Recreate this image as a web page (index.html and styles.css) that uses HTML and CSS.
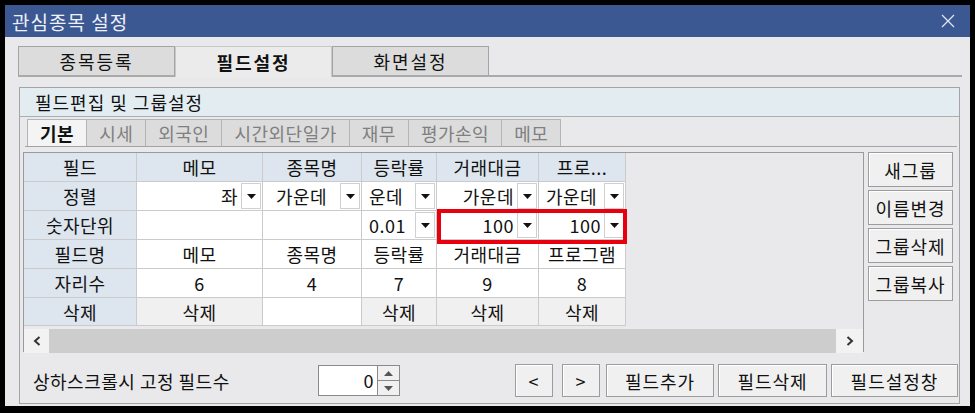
FILE: index.html
```html
<!doctype html>
<html>
<head>
<meta charset="utf-8">
<title>관심종목 설정</title>
<link rel="stylesheet" href="styles.css">
</head>
<body>
<div class="window">
  <div class="titlebar">
    <span class="title">관심종목 설정</span>
    <svg class="close" width="14" height="14" viewBox="0 0 14 14"><path d="M1 1L13 13M13 1L1 13" stroke="#dfe5f1" stroke-width="1.3" fill="none"/></svg>
  </div>

  <div class="tabs">
    <div class="tab">종목등록</div>
    <div class="tab active">필드설정</div>
    <div class="tab">화면설정</div>
  </div>

  <div class="group">
    <div class="group-head">필드편집 및 그룹설정</div>

    <div class="subtabs">
      <div class="subtab active">기본</div>
      <div class="subtab">시세</div>
      <div class="subtab">외국인</div>
      <div class="subtab">시간외단일가</div>
      <div class="subtab">재무</div>
      <div class="subtab">평가손익</div>
      <div class="subtab">메모</div>
    </div>

    <div class="editor">
      <div class="grid-box">
        <div class="field-grid">
          <!-- header -->
          <div class="cell head">필드</div>
          <div class="cell head">메모</div>
          <div class="cell head">종목명</div>
          <div class="cell head">등락률</div>
          <div class="cell head">거래대금</div>
          <div class="cell head">프로...</div>
          <!-- 정렬 -->
          <div class="cell head">정렬</div>
          <div class="cell dd"><span class="val r">좌</span><span class="arrow"><svg width="9" height="5" viewBox="0 0 9 5"><path d="M0 0H9L4.5 5Z" fill="#111"/></svg></span></div>
          <div class="cell dd"><span class="val">가운데</span><span class="arrow"><svg width="9" height="5" viewBox="0 0 9 5"><path d="M0 0H9L4.5 5Z" fill="#111"/></svg></span></div>
          <div class="cell dd"><span class="val l">운데</span><span class="arrow"><svg width="9" height="5" viewBox="0 0 9 5"><path d="M0 0H9L4.5 5Z" fill="#111"/></svg></span></div>
          <div class="cell dd"><span class="val r">가운데</span><span class="arrow"><svg width="9" height="5" viewBox="0 0 9 5"><path d="M0 0H9L4.5 5Z" fill="#111"/></svg></span></div>
          <div class="cell dd"><span class="val l">가운데</span><span class="arrow"><svg width="9" height="5" viewBox="0 0 9 5"><path d="M0 0H9L4.5 5Z" fill="#111"/></svg></span></div>
          <!-- 숫자단위 -->
          <div class="cell head">숫자단위</div>
          <div class="cell"></div>
          <div class="cell"></div>
          <div class="cell dd"><span class="val l">0.01</span><span class="arrow"><svg width="9" height="5" viewBox="0 0 9 5"><path d="M0 0H9L4.5 5Z" fill="#111"/></svg></span></div>
          <div class="cell dd"><span class="val r">100</span><span class="arrow"><svg width="9" height="5" viewBox="0 0 9 5"><path d="M0 0H9L4.5 5Z" fill="#111"/></svg></span></div>
          <div class="cell dd"><span class="val r">100</span><span class="arrow"><svg width="9" height="5" viewBox="0 0 9 5"><path d="M0 0H9L4.5 5Z" fill="#111"/></svg></span></div>
          <!-- 필드명 -->
          <div class="cell head">필드명</div>
          <div class="cell">메모</div>
          <div class="cell">종목명</div>
          <div class="cell">등락률</div>
          <div class="cell">거래대금</div>
          <div class="cell">프로그램</div>
          <!-- 자리수 -->
          <div class="cell head">자리수</div>
          <div class="cell">6</div>
          <div class="cell">4</div>
          <div class="cell">7</div>
          <div class="cell">9</div>
          <div class="cell">8</div>
          <!-- 삭제 -->
          <div class="cell head last">삭제</div>
          <div class="cell del last">삭제</div>
          <div class="cell last"></div>
          <div class="cell del last">삭제</div>
          <div class="cell del last">삭제</div>
          <div class="cell del last">삭제</div>
        </div>

        <div class="hscroll">
          <span class="sb-btn"><svg width="8" height="10" viewBox="0 0 8 10"><path d="M6.5 1L2 5L6.5 9" stroke="#333" stroke-width="2" fill="none"/></svg></span>
          <span class="sb-thumb"></span>
          <span class="sb-btn"><svg width="8" height="10" viewBox="0 0 8 10"><path d="M1.5 1L6 5L1.5 9" stroke="#333" stroke-width="2" fill="none"/></svg></span>
        </div>

        <div class="mark"></div>
      </div>

      <div class="group-btns">
        <button class="btn">새그룹</button>
        <button class="btn">이름변경</button>
        <button class="btn">그룹삭제</button>
        <button class="btn">그룹복사</button>
      </div>
    </div>

    <div class="footer-row">
      <span class="fix-label">상하스크롤시 고정 필드수</span>
      <div class="spin">
        <span class="spin-val">0</span>
        <span class="spin-btns">
          <span class="spin-up"><svg width="9" height="5" viewBox="0 0 9 5"><path d="M0 5H9L4.5 0Z" fill="#555"/></svg></span>
          <span class="spin-down"><svg width="9" height="5" viewBox="0 0 9 5"><path d="M0 0H9L4.5 5Z" fill="#555"/></svg></span>
        </span>
      </div>
      <div class="actions">
        <button class="btn nav">&lt;</button>
        <button class="btn nav">&gt;</button>
        <button class="btn add">필드추가</button>
        <button class="btn rem">필드삭제</button>
        <button class="btn cfg">필드설정창</button>
      </div>
    </div>
  </div>
</div>
</body>
</html>
```

FILE: styles.css
```css
html, body { margin:0; padding:0; }
body {
  background:#000;
  font-family:"Noto Sans CJK KR", "Noto Sans", sans-serif;
  font-size:18px;
  letter-spacing:0.5px;
  color:#111;
}
button { font-family:inherit; font-size:inherit; color:inherit; letter-spacing:inherit; }

.window { margin:5px; width:965px; height:401px; background:#e9e8eb; overflow:hidden; }

/* title bar */
.titlebar {
  height:32px; background:#3c5893; color:#eef1f8;
  display:flex; align-items:center; justify-content:space-between;
  padding:0 15px 0 7px; font-size:19px; letter-spacing:1px;
}
.close { display:block; }

/* main tabs */
.tabs { display:flex; margin:9px 8px 0 13px; height:29px; border-bottom:2px solid #aaa; }
.tab {
  width:157px; height:29px; box-sizing:border-box;
  border:1px solid #a4a4a4; border-bottom:0; background:#dcdcdc;
  display:flex; align-items:center; justify-content:center; letter-spacing:2px;
}
.tab.active { background:#ebebeb; font-weight:bold; height:31px; margin-bottom:-2px; border-color:#c8c8c8; }

/* group box */
.group { margin:10px 10px 0 14px; height:317px; box-sizing:border-box; border:1px solid #a4a4a4; }
.group-head {
  height:28px; background:#e3edf1; border-bottom:1px solid #a8b0b4;
  padding-left:15px; display:flex; align-items:center; letter-spacing:1px;
}

.subtabs { display:flex; margin:2px 2px 0 5px; height:27px; border-bottom:1px solid #a4a4a4; padding-left:2px; }
.subtab {
  padding:0 12px; background:#dcdcdc; color:#808080;
  border:1px solid #b4b4b4; border-bottom:0; border-left:0;
  display:flex; align-items:center;
}
.subtab.active { background:#f4f4f4; color:#111; font-weight:bold; border-left:1px solid #b4b4b4; }

/* grid + side buttons */
.editor { display:flex; margin:5px 0 0 3px; height:200px; }
.grid-box {
  position:relative; width:841px; box-sizing:border-box;
  border:1px solid #9a9a9a; background:#e9e8eb;
}
.field-grid {
  display:grid;
  grid-template-columns:113px 126px 99px 75px 102px 87px;
  grid-auto-rows:29px;
  width:602px;
}
.cell {
  background:#fff; border-right:1px solid #cbcbcb; border-bottom:1px solid #cbcbcb;
  display:flex; align-items:center; justify-content:center;
  overflow:hidden; white-space:nowrap;
}
.cell.head { background:#dde5ee; }
.cell.last { height:27px; }
.cell.del { background:#f0f0f0; }

.cell.dd { justify-content:flex-start; padding:1px 1px 1px 0; }
.dd .val { flex:1; text-align:center; padding:0 3px; }
.dd .val.r { text-align:right; }
.dd .val.l { text-align:left; padding-left:7px; }
.arrow {
  width:20px; height:100%; box-sizing:border-box; flex:none;
  border:1px solid #d0d0d0; background:#fff;
  display:flex; align-items:center; justify-content:center;
}

.hscroll { display:flex; height:24px; margin-top:2px; }
.sb-btn { width:25px; background:#f2f2f2; display:flex; align-items:center; justify-content:center; }
.sb-btn:last-child { width:27px; }
.sb-thumb { flex:1; background:#cdcdcd; }

.mark {
  position:absolute; left:413px; top:56px; width:190px; height:35px;
  box-sizing:border-box; border:4px solid #e8000f;
}

.group-btns { display:flex; flex-direction:column; gap:3px; margin-left:4px; }
.btn {
  box-sizing:border-box; background:#f0f0f0; border:1px solid #9c9c9c;
  box-shadow:inset 1px 1px 0 #fff; padding:0; cursor:default; white-space:nowrap;
}
.group-btns .btn { width:85px; height:35px; letter-spacing:1px; }

/* bottom row */
.footer-row { display:flex; align-items:center; margin-top:12px; height:33px; padding-left:13px; }
.fix-label { width:285px; }
.spin { display:flex; width:82px; height:31px; box-sizing:border-box; border:1px solid #8a8a8a; background:#fff; }
.spin-val { flex:1; text-align:right; padding-right:3px; line-height:29px; border-right:1px solid #8a8a8a; }
.spin-btns { width:21px; display:flex; flex-direction:column; background:#f0f0f0; }
.spin-btns span { flex:1; display:flex; align-items:center; justify-content:center; }
.spin-up { border-bottom:1px solid #8a8a8a; }

.actions { display:flex; margin-left:auto; margin-right:1px; gap:4px; }
.actions .btn { height:33px; letter-spacing:1px; }
.btn.nav { width:38px; margin-right:5px; }
.btn.nav + .btn.nav { margin-right:2px; }
.btn.add { width:108px; }
.btn.rem { width:109px; }
.btn.cfg { width:127px; }
```
